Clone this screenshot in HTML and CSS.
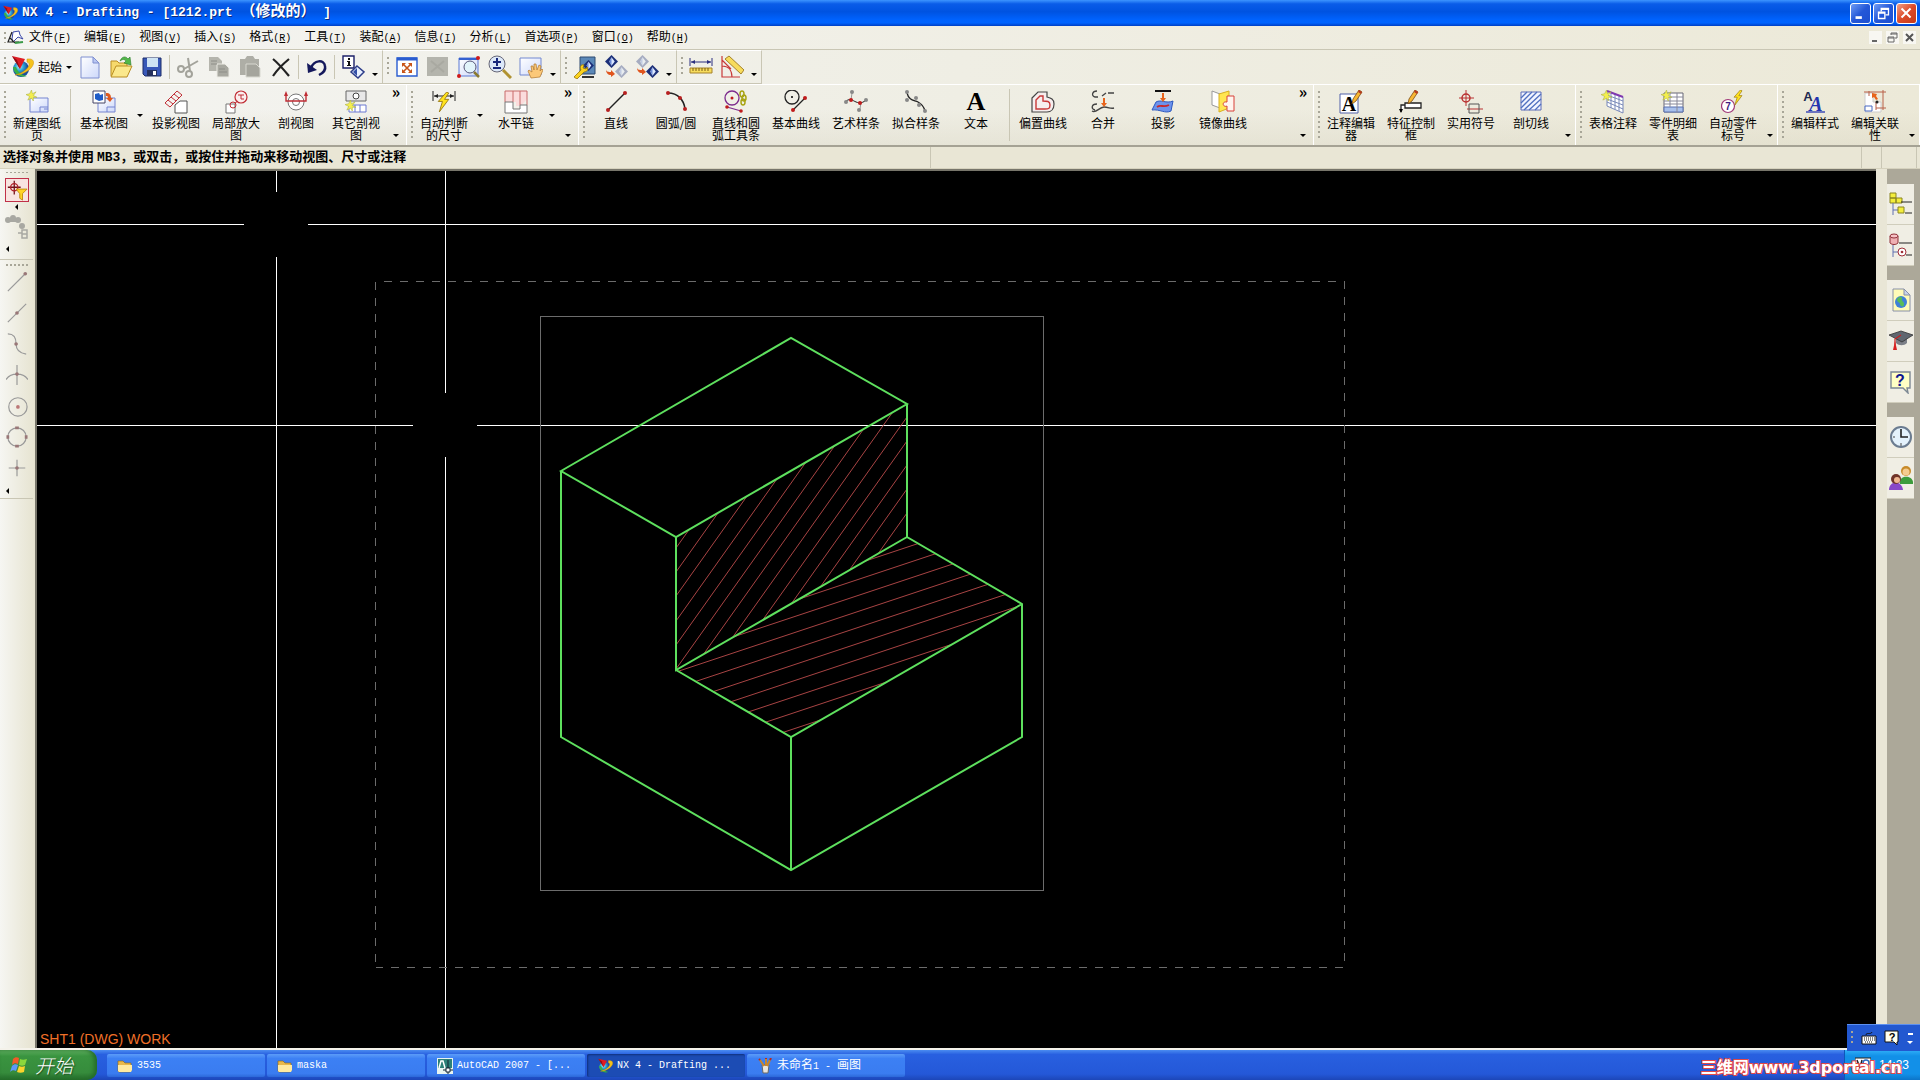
FILE: index.html
```
<!DOCTYPE html>
<html lang="zh-CN">
<head>
  <meta charset="UTF-8" />
  <meta name="viewport" content="width=device-width, initial-scale=1.0"/>
  <title>NX 4 - Drafting</title>
  <link rel="stylesheet" href="styles.css">
</head>
<body>

  <!-- Shared icon shapes -->
  <svg class="defs" aria-hidden="true">
    <defs>
      <radialGradient id="globe" cx="40%" cy="35%"><stop offset="0" stop-color="#b8f4f0"/><stop offset=".5" stop-color="#2fa8d8"/><stop offset="1" stop-color="#1a4fa0"/></radialGradient>
      <linearGradient id="pane" x2="1" y2="1"><stop offset="0" stop-color="#fff"/><stop offset="1" stop-color="#cdd8fa"/></linearGradient>
      <symbol id="nx" viewBox="0 0 24 24">
        <circle cx="11" cy="14" r="8" fill="url(#globe)"/>
        <path d="M3 12c1 8 8 11 14 9-6-1-9-4-11-9z" fill="#38b048"/>
        <path d="M17 4c9-1 8 6 2 11-4 3-9 5-14 5 10-2 18-11 12-13z" fill="#f5c21b" stroke="#c98d08" stroke-width=".5"/>
        <path d="M2 1l13 3-5 10z" fill="#e01c24"/><path d="M2 1l5 4 3 9z" fill="#8e0d14"/>
      </symbol>
      <symbol id="folder" viewBox="0 0 16 16">
        <path d="M1 3h5l2 2h6v8l-1 1H2l-1-1z" fill="#e8b84a" stroke="#8a6210" stroke-width=".6"/>
        <path d="M1 13V7h14v5l-1 2H2z" fill="#ffeaa0"/>
      </symbol>
      <symbol id="star" viewBox="0 0 12 12">
        <path d="M6 0l1 4 4-2-3 4 4 2-4 0 0 4-2-3-4 2 2-4-4-2 4-1z" fill="#f4ee4e" stroke="#a8b040" stroke-width=".6"/>
      </symbol>
      <symbol id="bolt" viewBox="0 0 12 20">
        <path d="M9 0L1 9h4l-3 10 9-12H7l4-6z" fill="#ffe31c" stroke="#93700a" stroke-width=".8"/>
      </symbol>
      <symbol id="pencil" viewBox="0 0 12 14">
        <path d="M8 0l3 2-6 9-4 3 1-5z" fill="#f7b733" stroke="#7a4a10" stroke-width=".8"/><path d="M8 0l3 2-1 2-3-2z" fill="#b83820"/>
      </symbol>
      <symbol id="cube" viewBox="0 0 12 12">
        <path d="M6 0l6 6-6 6-6-6z" fill="#1c2f78"/><path d="M6 2l3 4-3 4-2-4z" fill="#dce8ff"/><path d="M6 2v8l-2-4z" fill="#6c8ad8"/>
      </symbol>
    </defs>
  </svg>

  <!-- Title bar -->
  <header class="titlebar">
    <svg class="title-icon"><use href="#nx"/></svg>
    <h1>NX 4 - Drafting - [1212.prt <span class="cjk">（修改的）</span> ]</h1>
    <div class="window-buttons">
      <button aria-label="最小化"><svg viewBox="0 0 21 21"><path d="M5 15h7" stroke="#fff" stroke-width="3"/></svg></button>
      <button aria-label="还原"><svg viewBox="0 0 21 21"><path d="M8 8V5h8v7h-3M8 6h8M5 9h7v7H5zM5 10h7" fill="none" stroke="#fff" stroke-width="1.5"/></svg></button>
      <button class="close" aria-label="关闭"><svg viewBox="0 0 21 21"><path d="M5 5l10 10M15 5L5 15" stroke="#fff" stroke-width="2.2"/></svg></button>
    </div>
  </header>

  <!-- Menu bar -->
  <nav class="menubar">
    <span class="grip"></span>
    <svg class="menu-icon" viewBox="0 0 18 16"><path d="M6 2l6-1 1 4 3 4-5-2-5 5-1-3z" fill="#fff" stroke="#3a48a8"/><path d="M5 2L1 12l11 0M3 8l5 5" fill="none" stroke="#222" stroke-width="1.2"/><path d="M8 13l8-1" stroke="#3a9a48" stroke-width="2"/></svg>
    <button>文件<span class="key">(<u>F</u>)</span></button>
    <button>编辑<span class="key">(<u>E</u>)</span></button>
    <button>视图<span class="key">(<u>V</u>)</span></button>
    <button>插入<span class="key">(<u>S</u>)</span></button>
    <button>格式<span class="key">(<u>R</u>)</span></button>
    <button>工具<span class="key">(<u>T</u>)</span></button>
    <button>装配<span class="key">(<u>A</u>)</span></button>
    <button>信息<span class="key">(<u>I</u>)</span></button>
    <button>分析<span class="key">(<u>L</u>)</span></button>
    <button>首选项<span class="key">(<u>P</u>)</span></button>
    <button>窗口<span class="key">(<u>O</u>)</span></button>
    <button>帮助<span class="key">(<u>H</u>)</span></button>
    <div class="mdi-buttons">
      <button aria-label="最小化"><svg viewBox="0 0 13 13"><path d="M3 10h5" stroke="#666" stroke-width="2"/></svg></button>
      <button aria-label="还原"><svg viewBox="0 0 13 13"><path d="M5 4V2h6v5H9M5 3h6M2 6h6v5H2zM2 7h6" fill="none" stroke="#666"/></svg></button>
      <button aria-label="关闭"><svg viewBox="0 0 13 13"><path d="M3 3l7 7M10 3l-7 7" stroke="#555" stroke-width="2"/></svg></button>
    </div>
  </nav>

  <!-- Standard toolbar -->
  <div class="toolbar">
    <div class="bar">
      <span class="grip"></span>
      <button class="start-menu"><svg class="icon"><use href="#nx"/></svg>起始<i class="down"></i></button>
      <button aria-label="新建"><svg class="icon" viewBox="0 0 24 24"><path d="M3 2h12l6 6v15H3z" fill="url(#pane)" stroke="#7f8fd0"/><path d="M15 2v6h6z" fill="#b9c6f2" stroke="#7f8fd0"/></svg></button>
      <button aria-label="打开"><svg class="icon" viewBox="0 0 24 24"><path d="M2 21V6h6l2 2h8v4" fill="#f6d96c" stroke="#b98d22"/><path d="M2 22L7 11h16l-5 11z" fill="#fbe88c" stroke="#b98d22"/><path d="M11 6c2-5 6-5 8-2l2-2 1 8-7-2 2-2c-2-2-3-2-6 0z" fill="#51b848" stroke="#2a7a28" stroke-width=".6"/></svg></button>
      <button aria-label="保存"><svg class="icon" viewBox="0 0 24 24"><path d="M3 3h18v18H5l-2-2z" fill="#3858b8" stroke="#1c2c68"/><path d="M7 3h11v9H7z" fill="#cfe4f4"/><path d="M7 15h10v6H7z" fill="#26315e"/><path d="M13 16h3v4h-3z" fill="#fff"/></svg></button>
      <span class="sep"></span>
      <button aria-label="剪切"><svg class="icon" viewBox="0 0 24 24"><g fill="none" stroke="#a3a39b" stroke-width="2"><path d="M12 3l2 13M22 6L8 14"/><circle cx="5" cy="14" r="3"/><circle cx="13" cy="19" r="3"/></g></svg></button>
      <button aria-label="复制"><svg class="icon" viewBox="0 0 24 24"><path d="M2 2h9l4 4v10H2z" fill="#b5b5ad"/><path d="M10 9h8l4 4v9H10z" fill="#a8a8a0" stroke="#ecebe4"/><path d="M4 6h6M4 9h6M12 14h6M12 17h8" stroke="#8e8e88"/></svg></button>
      <button aria-label="粘贴"><svg class="icon" viewBox="0 0 24 24"><path d="M2 4h5l2-3h6l2 3h4v16H2z" fill="#aeaea6"/><path d="M8 9h10l4 4v9H8z" fill="#a5a59d" stroke="#d8d8d0"/></svg></button>
      <button aria-label="删除"><svg class="icon" viewBox="0 0 24 24"><path d="M4 4c5 4 11 11 16 17M20 4C14 9 8 15 4 21" fill="none" stroke="#222" stroke-width="2.2"/></svg></button>
      <span class="sep"></span>
      <button aria-label="撤消"><svg class="icon" viewBox="0 0 24 24"><path d="M6 13C9 5 19 4 20 11c1 4-2 7-6 9" fill="none" stroke="#15195c" stroke-width="2.5"/><path d="M2 8l1 10 9-3z" fill="#15195c"/></svg></button>
      <span class="sep"></span>
      <button aria-label="信息"><svg class="icon" viewBox="0 0 24 24"><path d="M2 1h11v12H2z" fill="#fff" stroke="#1c2068" stroke-width="1.4"/><path d="M7 3h2v2H7zM6 6h3v4h1v1H6v-1h1V7H6z" fill="#111"/><path d="M16 11l7 6-6 6-7-6z" fill="#e8f0ff" stroke="#2c3c88" stroke-width="1.5"/><path d="M16 13v8l-4-4z" fill="#3450a8"/></svg></button>
      <span class="more"><i class="down"></i></span>
    </div>
    <div class="bar">
      <span class="grip"></span>
      <button aria-label="适合窗口"><svg class="icon" viewBox="0 0 24 24"><path d="M2 3h20v18H2z" fill="#fff" stroke="#2a5cd0" stroke-width="1.4"/><path d="M2 4h20" stroke="#2a5cd0" stroke-width="3"/><path d="M8 9l8 8M16 9l-8 8" stroke="#c85418" stroke-width="1.6"/><path d="M7 8h4L7 12zM17 8v4l-4-4zM7 18v-4l4 4zM17 18h-4l4-4z" fill="#c85418"/></svg></button>
      <button aria-label="缩放"><svg class="icon" viewBox="0 0 24 24"><path d="M1 2h21v19H1z" fill="#b4b4ac"/><path d="M5 6l13 11M18 6L5 17" stroke="#a9a9a1" stroke-width="2"/></svg></button>
      <button aria-label="窗口缩放"><svg class="icon" viewBox="0 0 24 24"><path d="M2 3h19v18H2z" fill="url(#pane)" stroke="#5b78d4"/><path d="M2 4h19" stroke="#3460d0" stroke-width="2"/><circle cx="13" cy="12" r="6" fill="#e2f4fa" stroke="#557"/><path d="M17 17l5 5" stroke="#8a7a30" stroke-width="2.5"/><circle cx="21" cy="3" r="2" fill="#d01818"/><circle cx="2" cy="21" r="2" fill="#d01818"/></svg></button>
      <button aria-label="放大缩小"><svg class="icon" viewBox="0 0 24 24"><circle cx="9" cy="9" r="8" fill="#dce8f8" stroke="#667"/><path d="M9 3v8M5 7h8M5 13h8" stroke="#18287c" stroke-width="2"/><path d="M15 15l8 8" stroke="#b09230" stroke-width="3"/></svg></button>
      <button aria-label="平移"><svg class="icon" viewBox="0 0 24 24"><path d="M1 3h21v17H1z" fill="url(#pane)" stroke="#7288d0"/><path d="M12 23l-3-7 1-1 3 2-1-6 2 0 1 4 0-6 2 0 1 6 2-5 2 1-1 5 2-2 1 1-3 7z" fill="#fbc878" stroke="#b0772c" stroke-width=".7"/></svg></button>
      <span class="more"><i class="down"></i></span>
    </div>
    <div class="bar">
      <span class="grip"></span>
      <button aria-label="编辑显示"><svg class="icon" viewBox="0 0 24 24"><path d="M7 2h15v17H7z" fill="#5b88b8" stroke="#2f4a70"/><use href="#cube" x="10" y="5" width="11" height="11"/><path d="M1 22l7-7c-2-4 1-6 3-5l-1 3 3 1 1-2c2 2 0 5-3 5l-7 7z" fill="#fad21e" stroke="#97730c" stroke-width=".8"/><path d="M9 22h12" stroke="#333" stroke-width="2"/></svg></button>
      <button aria-label="显示隐藏"><svg class="icon" viewBox="0 0 24 24"><use href="#cube" x="1" y="0" width="13" height="13"/><use href="#cube" x="11" y="10" width="13" height="13" opacity=".35"/><path d="M2 14c0 3 3 3 5 3v-2l4 4-4 3v-2c-3 0-5-2-5-6z" fill="#e0551e"/></svg></button>
      <button aria-label="反向隐藏"><svg class="icon" viewBox="0 0 24 24"><use href="#cube" x="1" y="0" width="13" height="13" opacity=".35"/><use href="#cube" x="11" y="10" width="13" height="13"/><path d="M2 12c0 3 3 3 5 3v-2l4 4-4 3v-2c-3 0-5-2-5-6z" fill="#e0551e"/></svg></button>
      <span class="more"><i class="down"></i></span>
    </div>
    <div class="bar">
      <span class="grip"></span>
      <button aria-label="测量距离"><svg class="icon" viewBox="0 0 24 24"><path d="M1 3v8M23 3v8M2 7h20" stroke="#2b2f80"/><path d="M2 7l4-2v4zM22 7l-4-2v4z" fill="#2b2f80"/><path d="M1 13h22v5H1z" fill="#f7dc5c" stroke="#a5822a"/><path d="M4 13v3M7 13v3M10 13v3M13 13v3M16 13v3M19 13v3" stroke="#7a5c14"/></svg></button>
      <button aria-label="测量角度"><svg class="icon" viewBox="0 0 24 24"><path d="M2 1v21h18M2 11c6 0 10 4 10 11M2 5l9 9" fill="none" stroke="#c83838" stroke-width="1.2"/><path d="M5 4l4-3 15 14-3 4z" fill="#f7dc5c" stroke="#a5822a"/></svg></button>
      <span class="more"><i class="down"></i></span>
    </div>
  </div>

  <!-- Drafting toolbars -->
  <div class="ribbon">
    <div class="group">
      <span class="grip"></span>
      <button><svg class="icon" viewBox="0 0 24 24"><path d="M5 8h18v14H5z" fill="url(#pane)" stroke="#7484d0"/><path d="M15 17h8M15 17v5M19 19h4" stroke="#7484d0"/><use href="#star" x="1" y="0" width="11" height="11"/></svg><span>新建图纸页</span></button>
      <span class="sep"></span>
      <button><svg class="icon" viewBox="0 0 24 24"><path d="M6 8h17v14H6z" fill="url(#pane)" stroke="#7484d0"/><path d="M15 17h8M15 17v5" stroke="#7484d0"/><path d="M1 1h12v12H1z" fill="#fff" stroke="#446"/><path d="M3 4l4-1 1 2 3-1v6l-4 1-4-2z" fill="#1f5cc8"/><path d="M14 3c4 0 5 2 5 5h2l-3 4-4-4h2c0-2-1-2-2-2z" fill="#e0591e"/></svg><span>基本视图</span></button>
      <span class="drop"><i class="down"></i></span>
      <button><svg class="icon" viewBox="0 0 24 24"><path d="M1 13L13 1l5 4L6 17zM7 7l5 4M10 4l5 4M4 10l5 4" fill="none" stroke="#c02c34"/><path d="M11 23V15l5-4h7v12z" fill="#fff" stroke="#555"/></svg><span>投影视图</span></button>
      <button><svg class="icon" viewBox="0 0 24 24"><path d="M2 14h9v9H2z" fill="#fff" stroke="#777"/><circle cx="17" cy="7" r="6" fill="#fbeeee" stroke="#c02c34" stroke-width="1.2"/><circle cx="9" cy="15" r="3" fill="none" stroke="#c02c34"/><path d="M11 13l3-2M14 5h3v4h3M17 5l3 0" fill="none" stroke="#c02c34"/></svg><span>局部放大图</span></button>
      <button><svg class="icon" viewBox="0 0 24 24"><circle cx="12" cy="12" r="8" fill="#fff" stroke="#777"/><circle cx="12" cy="12" r="3.5" fill="none" stroke="#777"/><path d="M2 5v6h20V5" fill="none" stroke="#c02c34" stroke-width="1.4"/><path d="M2 1l2 5H0zM22 1l2 5h-4z" fill="#c02c34"/></svg><span>剖视图</span></button>
      <button><svg class="icon" viewBox="0 0 24 24"><path d="M2 1h20v10H2z" fill="#e8e8e8" stroke="#666"/><circle cx="12" cy="6" r="3" fill="#fff" stroke="#444"/><path d="M5 15h17v7H5zM11 15v7M16 15v7" fill="#fff" stroke="#6b79d0"/><use href="#star" x="1" y="10" width="11" height="11"/></svg><span>其它剖视图</span></button>
      <span class="overflow"><b>»</b><i class="down"></i></span>
    </div>
    <div class="group">
      <span class="grip"></span>
      <button><svg class="icon" viewBox="0 0 24 24"><path d="M1 1v10M23 1v10M2 6h20" stroke="#222"/><path d="M2 6l4-2v4zM22 6l-4-2v4z" fill="#222"/><use href="#bolt" x="5" y="2" width="13" height="21"/></svg><span>自动判断的尺寸</span></button>
      <span class="drop"><i class="down"></i></span>
      <button><svg class="icon" viewBox="0 0 24 24"><path d="M1 1h22v8l-6 7h-5V12H1z" fill="#fbdcdc"/><path d="M1 1h22M1 1v11M9 1v11M16 1v14M23 1v14" stroke="#c86a6a" fill="none"/><path d="M1 12h8v7h7v-4h7v8H1z" fill="#fff" stroke="#777"/></svg><span>水平链</span></button>
      <span class="drop"><i class="down"></i></span>
      <span class="overflow"><b>»</b><i class="down"></i></span>
    </div>
    <div class="group grow">
      <span class="grip"></span>
      <button><svg class="icon" viewBox="0 0 24 24"><path d="M4 20L21 3" stroke="#222" stroke-width="1.4"/><g fill="#b82020"><circle cx="4" cy="20" r="2"/><circle cx="21" cy="3" r="2"/></g></svg><span>直线</span></button>
      <button><svg class="icon" viewBox="0 0 24 24"><path d="M4 3c10 0 16 7 17 16" fill="none" stroke="#222" stroke-width="1.6"/><g fill="#b82020"><circle cx="4" cy="3" r="2"/><circle cx="16" cy="8" r="2"/><circle cx="21" cy="19" r="2"/></g></svg><span>圆弧/圆</span></button>
      <button><svg class="icon" viewBox="0 0 24 24"><circle cx="8" cy="8" r="7" fill="none" stroke="#7c2a8c" stroke-width="1.3"/><path d="M3 17l14 4" stroke="#7c2a8c" stroke-width="1.3"/><g fill="#c01c1c"><circle cx="8" cy="8" r="1.5"/><circle cx="3" cy="17" r="1.8"/><circle cx="17" cy="21" r="1.8"/></g><g fill="none" stroke="#a8a414" stroke-width="1.5"><ellipse cx="18" cy="4" rx="2" ry="3"/><ellipse cx="20" cy="8" rx="2" ry="3"/><ellipse cx="19" cy="12" rx="2" ry="3"/></g></svg><span>直线和圆弧工具条</span></button>
      <button><svg class="icon" viewBox="0 0 24 24"><circle cx="8" cy="7" r="7" fill="none" stroke="#222" stroke-width="1.3"/><circle cx="8" cy="7" r="1"/><path d="M9 20L21 8" stroke="#222" stroke-width="1.3"/><g fill="#c01c1c"><circle cx="9" cy="20" r="2"/><circle cx="21" cy="8" r="2"/></g></svg><span>基本曲线</span></button>
      <button><svg class="icon" viewBox="0 0 24 24"><path d="M8 3L7 10M16 19l1-7" stroke="#999"/><path d="M1 12c4-4 7-2 9-1s7 4 12-1" fill="none" stroke="#222"/><g fill="#888"><circle cx="8" cy="2" r="2"/><circle cx="2" cy="12" r="2"/><circle cx="15" cy="20" r="2"/><circle cx="22" cy="10" r="2"/></g><circle cx="7" cy="10" r="2" fill="#c01c1c"/><circle cx="16" cy="13" r="2" fill="#c01c1c"/></svg><span>艺术样条</span></button>
      <button><svg class="icon" viewBox="0 0 24 24"><path d="M3 3c2 8 7 7 11 9s6 5 7 9" fill="none" stroke="#222" stroke-width="1.3"/><g fill="#888"><circle cx="3" cy="2" r="2"/><circle cx="3" cy="10" r="2"/><circle cx="12" cy="8" r="2"/><circle cx="15" cy="15" r="2"/><circle cx="21" cy="21" r="2"/></g></svg><span>拟合样条</span></button>
      <button><b class="icon text-icon">A</b><span>文本</span></button>
      <span class="sep"></span>
      <button><svg class="icon" viewBox="0 0 24 24"><path d="M1 8l6-6h9v5c4 1 7 2 7 7s-3 8-7 8H1z" fill="#f6eeee" stroke="#444" stroke-width="1.2"/><path d="M5 10l4-4h3v5c4 0 7 0 7 4s-2 4-5 4H5z" fill="none" stroke="#c83838" stroke-width="1.4"/></svg><span>偏置曲线</span></button>
      <button><svg class="icon" viewBox="0 0 24 24"><path d="M6 1C1 1 0 6 4 7h3M11 6l4-3M17 3l6 0M1 21c4 3 7-4 12-4s6 2 10 1M6 14c-6 0-6 5-2 6" fill="none" stroke="#444" stroke-width="1.3"/><path d="M12 8h2v5h2l-3 4-3-4h2z" fill="#e8641c"/></svg><span>合并</span></button>
      <button><svg class="icon" viewBox="0 0 24 24"><path d="M4 1h16" stroke="#111" stroke-width="2"/><path d="M1 20l4-8c5-3 10 2 17-1l-2 10c-6 3-11-2-19-1z" fill="#6d93ec" stroke="#2c58c0"/><path d="M6 17c4-3 6 1 12-2" fill="none" stroke="#c8282c" stroke-width="1.8"/><path d="M11 3h2v5h2l-3 4-3-4h2z" fill="#e8641c"/></svg><span>投影</span></button>
      <button><svg class="icon" viewBox="0 0 24 24"><path d="M1 1l8 3v14l-8-3z" fill="#fff" stroke="#999"/><path d="M8 4l10-3v17l-10 4z" fill="#ffe650" stroke="#d8b020"/><path d="M16 6h7v15h-7v-5c-4 2-6-5 0-4z" fill="#fff4ee" stroke="#d84038"/></svg><span>镜像曲线</span></button>
      <span class="overflow"><b>»</b><i class="down"></i></span>
    </div>
    <div class="group narrow">
      <span class="grip"></span>
      <button><svg class="icon" viewBox="0 0 24 24"><path d="M1 4h18v19H1z" fill="#fff" stroke="#5060a8"/><text class="serif-a" x="10" y="21" text-anchor="middle">A</text><use href="#pencil" x="12" y="0" width="12" height="14"/></svg><span>注释编辑器</span></button>
      <button><svg class="icon" viewBox="0 0 24 24"><path d="M6 13h16v5H6zM6 15H2v7" fill="#fff" stroke="#222" stroke-width="1.3"/><path d="M0 19h4l-2 4z"/><use href="#pencil" x="8" y="0" width="12" height="14"/></svg><span>特征控制框</span></button>
      <button><svg class="icon" viewBox="0 0 24 24"><path d="M7 0v16M0 8h15M8 19h16" stroke="#b83030"/><circle cx="7" cy="8" r="4" fill="none" stroke="#b83030" stroke-width="1.5"/><path d="M10 14h10v9H10z" fill="none" stroke="#555"/></svg><span>实用符号</span></button>
      <button><svg class="icon" viewBox="0 0 24 24"><path d="M2 2h20v18H2z" fill="#f2f4ff" stroke="#5c6cb8"/><path d="M2 8l6-6M2 13L13 2M2 18L18 2M5 20L22 4M10 20L22 9M16 20l6-6" stroke="#5070c0" stroke-width="1.3"/></svg><span>剖切线</span></button>
      <span class="overflow"><i class="down"></i></span>
    </div>
    <div class="group narrow">
      <span class="grip"></span>
      <button><svg class="icon" viewBox="0 0 24 24"><path d="M6 1l16 6v16L6 16z" fill="#fff" stroke="#7888b8"/><path d="M6 5l16 6M6 9l16 6M6 12l16 7M10 3v15M14 4v15M18 6v15" stroke="#7888b8"/><path d="M6 1l16 6" stroke="#8038b0" stroke-width="2"/><use href="#star" x="0" y="0" width="11" height="11"/></svg><span>表格注释</span></button>
      <button><svg class="icon" viewBox="0 0 24 24"><path d="M3 3h19v19H3z" fill="#fff" stroke="#667"/><path d="M3 17h19v5H3z" fill="#a8c0ec" stroke="#5870b0"/><path d="M3 7h19M3 11h19M3 14h19M9 3v14M16 3v19" stroke="#889"/><use href="#star" x="0" y="0" width="11" height="11"/></svg><span>零件明细表</span></button>
      <button><svg class="icon" viewBox="0 0 24 24"><circle cx="7" cy="16" r="6.5" fill="#fff" stroke="#a03878" stroke-width="1.2"/><text class="digit" x="7" y="20" text-anchor="middle">7</text><use href="#bolt" x="11" y="0" width="12" height="16"/></svg><span>自动零件标号</span></button>
      <span class="overflow"><i class="down"></i></span>
    </div>
    <div class="group narrow">
      <span class="grip"></span>
      <button><svg class="icon" viewBox="0 0 24 24"><text class="sans-a" x="5" y="11" text-anchor="middle">A</text><text class="blue-a" x="13" y="21" text-anchor="middle">A</text><path d="M3 22h19" stroke="#2434b0" stroke-width="1.3"/></svg><span>编辑样式</span></button>
      <button><svg class="icon" viewBox="0 0 24 24"><path d="M2 3h8v9h8v10H2z" fill="#fff" stroke="#ccc"/><path d="M2 16h7v5H2z" fill="#fff" stroke="#4868c0"/><path d="M1 2h22M6 1v5M20 0v20M13 18h10M13 12v8" stroke="#b86048" fill="none"/><path d="M9 3l5 1-1 2 2 3-2 1-2-3-2 1z" fill="#e8641c"/><circle cx="14" cy="12" r="1.5" fill="#222"/></svg><span>编辑关联性</span></button>
      <span class="overflow"><i class="down"></i></span>
    </div>
  </div>

  <!-- Cue line -->
  <div class="cueline">
    <p class="cue">选择对象并使用 <span class="latin">MB3</span>，或双击，或按住并拖动来移动视图、尺寸或注释</p>
    <p class="status"></p>
    <span class="cell"></span>
    <span class="cell wide"></span>
  </div>

  <main>
    <!-- Selection and snap point tools -->
    <aside class="snapbar">
      <div class="snapgroup">
        <span class="hgrip"></span>
        <button class="active" aria-label="选择过滤"><svg viewBox="0 0 24 24"><path d="M9 2v15M2 9h14" stroke="#701018" stroke-width="1.4"/><circle cx="9" cy="9" r="4" fill="none" stroke="#b02028" stroke-width="1.4"/><path d="M11 11h12l-5 5v7l-3-2v-5z" fill="#ffd426" stroke="#c08a10"/></svg></button>
        <i class="left center"></i>
        <button aria-label="选择意图"><svg viewBox="0 0 24 24"><g fill="#a8a8a2"><circle cx="3" cy="5" r="3"/><circle cx="8" cy="3" r="3"/><circle cx="13" cy="5" r="3"/><circle cx="17" cy="11" r="3"/><path d="M3 3h10v4H3z"/></g><path d="M17 15h5v8h-5zM17 19h5M13 18l4 0" fill="none" stroke="#a8a8a2" stroke-width="1.5"/></svg></button>
        <i class="left"></i>
      </div>
      <div class="snapgroup points">
        <span class="hgrip"></span>
        <button aria-label="端点"><svg viewBox="0 0 24 24"><path d="M2 22L21 3" stroke="#999" stroke-width="1.3"/><circle cx="21" cy="3" r="2" fill="#977"/></svg></button>
        <button aria-label="中点"><svg viewBox="0 0 24 24"><path d="M2 22L22 2" stroke="#999" stroke-width="1.3"/><circle cx="12" cy="12" r="2" fill="#977"/></svg></button>
        <button aria-label="控制点"><svg viewBox="0 0 24 24"><path d="M2 1c7 0 9 4 9 11s4 10 11 11" fill="none" stroke="#999" stroke-width="1.3"/><circle cx="11" cy="12" r="2" fill="#977"/></svg></button>
        <button aria-label="交点"><svg viewBox="0 0 24 24"><path d="M12 1v22M0 17c5-8 19-8 24 0" fill="none" stroke="#999" stroke-width="1.3"/><circle cx="12" cy="11" r="2" fill="#977"/></svg></button>
        <button aria-label="圆心"><svg viewBox="0 0 24 24"><circle cx="13" cy="13" r="10" fill="none" stroke="#999" stroke-width="1.3"/><circle cx="13" cy="13" r="2" fill="#b77"/></svg></button>
        <button aria-label="象限点"><svg viewBox="0 0 24 24"><circle cx="12" cy="12" r="10" fill="none" stroke="#999" stroke-width="1.3"/><path d="M10 2h4M10 22h4M2 10v4M22 10v4" stroke="#977" stroke-width="3"/></svg></button>
        <button aria-label="现有点"><svg viewBox="0 0 24 24"><path d="M12 3v18M3 12h18" stroke="#999" stroke-width="1.3"/><circle cx="12" cy="12" r="2" fill="#977"/></svg></button>
        <i class="left"></i>
      </div>
    </aside>

    <!-- Drawing sheet -->
    <section class="canvas">
      <svg class="drawing">
        <defs>
          <clipPath id="riser"><path d="M676 537L907 404V537L676 670z"/></clipPath>
          <clipPath id="tread"><path d="M676 670L907 537L1022 604L791 737z"/></clipPath>
        </defs>
        <g transform="translate(-37 -171)" fill="none">
          <g class="datum">
            <path d="M0 224.5H244M308 224.5H5000M0 425.5H413M477 425.5H5000"/>
            <path d="M276.5 0V192M276.5 257V5000M445.5 0V393M445.5 457V5000"/>
          </g>
          <path class="border" stroke-dasharray="8 8" d="M384 281.5H1344M375.5 282V968M1207 967.5H1344M1199 967.5H376M1344.5 281V968"/>
          <rect class="border" x="540.5" y="316.5" width="503" height="574"/>
          <path class="hatch" clip-path="url(#riser)" d="M676 548l231-325M676 572l231-325M676 596l231-325M676 621l231-325M676 645l231-325M676 669l231-325M676 693l231-325M676 717l231-325M676 742l231-325M676 766l231-325M676 790l231-325M676 814l231-325M676 838l231-325"/>
          <path class="hatch" clip-path="url(#tread)" d="M676 624l346-115M676 640l346-115M676 656l346-115M676 672l346-115M676 688l346-115M676 704l346-115M676 720l346-115M676 736l346-115M676 752l346-115M676 768l346-115"/>
          <path class="edge" d="M561 471L791 338L907 404L676 537zM561 471V737L791 870L1022 737V604L907 537V404M676 537V670L907 537M676 670L791 737L1022 604M791 737V870"/>
        </g>
      </svg>
      <span class="sheet-name">SHT1 (DWG) WORK</span>
    </section>

    <!-- Resource bar -->
    <aside class="resources">
      <div class="tabs">
        <button aria-label="装配导航器"><svg viewBox="0 0 24 24"><path d="M1 1h6v5H1zM1 6h6v5H1zM7 6h6v5H7z" fill="#f4ee3c" stroke="#8a8420"/><path d="M12 10h11M16 21h7" stroke="#222"/><path d="M4 11v12M4 18h5" stroke="#6070b0"/><path d="M9 15h6v6H9z" fill="#f4ee3c" stroke="#8a8420"/></svg></button>
        <button aria-label="部件导航器"><svg viewBox="0 0 24 24"><path d="M1 3v7c2 2 6 2 8 0V3" fill="#eeb0b4" stroke="#903038"/><ellipse cx="5" cy="3" rx="4" ry="2" fill="#f6c0c4" stroke="#903038"/><path d="M10 10h13M17 22h6" stroke="#222"/><path d="M4 12v12M4 19h5" stroke="#6070b0"/><circle cx="13" cy="19" r="4" fill="#fff" stroke="#a03038"/><circle cx="13" cy="19" r="1.3" fill="#a03038"/></svg></button>
      </div>
      <div class="tabs">
        <button aria-label="浏览器"><svg viewBox="0 0 24 24"><path d="M4 1h11l6 6v16H4z" fill="#fffbb8" stroke="#8890a8"/><path d="M15 1v6h6z" fill="#c8d4ec" stroke="#8890a8"/><circle cx="12" cy="14" r="6" fill="#3f80d8"/><path d="M8 11c3-4 6-2 5 0s3 3 2 6-4 1-4-1-3-1-3-5z" fill="#58bc58"/></svg></button>
        <button aria-label="培训"><svg viewBox="0 0 24 24"><path d="M7 8v6c3 3 8 3 11 0V8" fill="#7c8088"/><path d="M0 6l12-4 12 4-11 7z" fill="#60666f" stroke="#333" stroke-width=".8"/><path d="M12 6L6 10v6" fill="none" stroke="#c82020" stroke-width="1.2"/><path d="M6 12l2 9H4z" fill="#d82020"/></svg></button>
        <button aria-label="帮助"><svg viewBox="0 0 24 24"><path d="M2 2h19v16h-3l1 5-5-5H2z" fill="#ffffc4" stroke="#7c8894" stroke-width="1.4"/><text class="question" x="11" y="16" text-anchor="middle">?</text></svg></button>
      </div>
      <div class="tabs">
        <button aria-label="历史"><svg viewBox="0 0 24 24"><circle cx="12" cy="12" r="10" fill="#e4f2fc" stroke="#6b7c90" stroke-width="2"/><path d="M12 4v8h7" fill="none" stroke="#222" stroke-width="1.6"/><path d="M12 18v3M4 12h2" stroke="#444"/></svg></button>
        <button aria-label="角色"><svg viewBox="0 0 24 24"><path d="M11 16c0-7 12-7 13 0v2H11z" fill="#3c9c3c"/><circle cx="17" cy="5" r="5" fill="#c88a28"/><circle cx="17" cy="6" r="3.5" fill="#f4cc90"/><path d="M0 24c0-10 13-10 14 0z" fill="#8848c8"/><circle cx="7" cy="13" r="5" fill="#703428"/><circle cx="8" cy="14" r="3" fill="#f0b890"/></svg></button>
      </div>
    </aside>
  </main>

  <!-- Taskbar -->
  <footer class="taskbar">
    <button class="start">
      <svg viewBox="0 0 20 20"><path d="M3 4c2-2 4-2 6-1L8 9C6 8 4 8 2 10z" fill="#f25a28"/><path d="M10 4c2 1 4 1 7 0l-2 6c-2 1-4 1-6 0z" fill="#8cd83c"/><path d="M2 11c2-2 4-2 6-1l-2 6c-2-1-4-1-6 1z" fill="#5c98f8"/><path d="M9 11c2 1 4 1 6 0l-1 6c-2 1-5 1-7 0z" fill="#fcd42c"/></svg>
      开始
    </button>
    <div class="tasks">
      <button><svg><use href="#folder"/></svg><span class="latin">3535</span></button>
      <button><svg><use href="#folder"/></svg><span class="latin">maska</span></button>
      <button><svg viewBox="0 0 16 16"><path d="M0 0h16v16H0z" fill="#e8f4f0"/><path d="M1 1h14v9H1z" fill="#2c8078"/><path d="M2 10l2-7h2l2 7" fill="none" stroke="#fff" stroke-width="1.5"/><path d="M11 2v14M6 12h10" stroke="#123" stroke-width="1"/><path d="M9 10h4v4H9z" fill="#fff" stroke="#123"/></svg><span class="latin">AutoCAD 2007 - [...</span></button>
      <button class="pressed"><svg><use href="#nx"/></svg><span class="latin">NX 4 - Drafting ...</span></button>
      <button><svg viewBox="0 0 16 16"><path d="M5 7h7l-1 8H6z" fill="#e8e4dc" stroke="#666"/><path d="M7 8L3 2M9 8V1M10 8l3-6" stroke="#c8862c" stroke-width="2"/><path d="M3 2l-1-1M9 1V0M13 2l1-2" stroke="#b82820" stroke-width="2"/></svg><span>未命名<span class="latin">1 - </span>画图</span></button>
    </div>
    <div class="tray">
      <svg viewBox="0 0 16 16"><path d="M0 1h16v14H0z" fill="#fff" stroke="#222"/><path d="M2 3l3 8 2-8" fill="none" stroke="#222" stroke-width="1.5"/><circle cx="11" cy="6" r="3" fill="none" stroke="#2a68c0" stroke-width="1.5"/></svg>
      <time>14:23</time>
    </div>
    <span class="watermark">三维网www.3dportal.cn</span>
    <div class="langbar">
      <span class="grip"></span>
      <svg viewBox="0 0 16 16"><path d="M1 6h14v8H1z" fill="#fff" stroke="#111"/><path d="M3 8h11M3 10h11M4 12h8" stroke="#111" stroke-dasharray="1 1"/><path d="M5 5c0-3 5 0 6-3" fill="none" stroke="#111"/></svg>
      <svg viewBox="0 0 16 16"><path d="M1 1h13v11h-1v3l-3-3H1z" fill="#fffff0" stroke="#111"/><text class="lang-help" x="8" y="11" text-anchor="middle">?</text></svg>
      <span class="lang-options"><i class="dash"></i><i class="down"></i></span>
    </div>
  </footer>

</body>
</html>
```
FILE: styles.css
```
:root {
  --face: #ece9d8;
  --face-light: #f4f4f1;
  --shadow: #c9c6b4;
  --cjk: "Noto Sans CJK SC", sans-serif;
  --mono: "Liberation Mono", "Noto Sans CJK SC", monospace;
}

* {
  box-sizing: border-box;
}

body {
  margin: 0;
  height: 100vh;
  overflow: hidden;
  display: flex;
  flex-direction: column;
  background: var(--face);
  font-family: var(--cjk);
  font-size: 12px;
  line-height: 12px;
  color: #000;
}

button {
  margin: 0;
  padding: 0;
  border: none;
  background: none;
  font: inherit;
  color: inherit;
}

svg {
  display: block;
  flex: none;
}

.defs {
  position: absolute;
  width: 0;
  height: 0;
}

.latin,
.key {
  font-family: var(--mono);
  font-size: 10px;
}

.icon {
  width: 24px;
  height: 24px;
}

.down {
  width: 0;
  height: 0;
  border: 3px solid transparent;
  border-top-color: #000;
  border-bottom: none;
}

.left {
  width: 0;
  height: 0;
  border: 3px solid transparent;
  border-right-color: #000;
  border-left: none;
}

.grip {
  flex: none;
  width: 7px;
  background: linear-gradient(#a8a698, #a8a698) 4px 0 / 2px 2px;
  background: repeating-linear-gradient(#a8a698 0 2px, transparent 2px 5px) 4px 0 / 2px 100% no-repeat content-box;
  padding: 6px 0;
}

.sep {
  flex: none;
  width: 1px;
  margin: 4px 3px;
  background: var(--shadow);
}

/* Title bar */
.titlebar {
  flex: none;
  display: flex;
  align-items: center;
  height: 26px;
  padding: 0 3px 0 2px;
  background: linear-gradient(#3d95ff 0, #0a5ce8 15%, #0053e1 45%, #0062fd 75%, #0064ff 88%, #003fc4 100%);
  color: #fff;
}

.titlebar h1 {
  flex: 1;
  margin: 0;
  font-family: var(--mono);
  font-size: 13px;
  line-height: 18px;
  text-shadow: 1px 1px #0a2a80;
  white-space: pre;
}

.titlebar .cjk {
  font-size: 15px;
}

.title-icon {
  width: 16px;
  height: 16px;
  margin-right: 4px;
}

.window-buttons {
  display: flex;
  gap: 2px;
}

.window-buttons button {
  width: 21px;
  height: 21px;
  border: 1px solid #fff;
  border-radius: 3px;
  background: linear-gradient(135deg, #6f9cf4, #2458d8 50%, #1d4fd0);
}

.window-buttons .close {
  background: linear-gradient(135deg, #f0a088, #dc4a28 50%, #c43a18);
}

/* Menu bar */
.menubar {
  flex: none;
  display: flex;
  align-items: center;
  height: 24px;
  padding-right: 4px;
  background: linear-gradient(90deg, var(--face-light), var(--face));
  border-bottom: 1px solid var(--shadow);
}

.menubar .grip {
  align-self: stretch;
}

.menubar > button {
  margin-right: 13px;
}

.menu-icon {
  width: 18px;
  height: 16px;
  margin-right: 4px;
}

.mdi-buttons {
  display: flex;
  gap: 4px;
  margin-left: auto;
}

.mdi-buttons button {
  width: 13px;
  height: 13px;
  background: #f8f7f2;
}

/* Standard toolbar */
.toolbar {
  flex: none;
  display: flex;
  height: 34px;
  background: linear-gradient(90deg, var(--face-light), #efeee4 50%, var(--face));
}

.bar {
  display: flex;
  border-top: 1px solid #fff;
  border-right: 1px solid var(--shadow);
  border-bottom: 1px solid var(--shadow);
}

.bar .grip {
  width: 8px;
}

.bar .sep {
  margin: 4px 2px;
}

.bar button {
  display: flex;
  align-items: center;
  justify-content: center;
  width: 31px;
}

.bar .start-menu {
  width: 66px;
  gap: 4px;
}

.more {
  display: flex;
  align-items: flex-end;
  justify-content: center;
  width: 14px;
  padding-bottom: 7px;
}

/* Drafting toolbars */
.ribbon {
  flex: none;
  display: flex;
  height: 63px;
  background: linear-gradient(90deg, var(--face-light), #efeee4 50%, var(--face));
  border-top: 1px solid #fff;
  border-bottom: 2px solid #a5a294;
}

.group {
  display: flex;
  border-right: 1px solid #fff;
  background: linear-gradient(transparent 40%, rgba(214, 210, 190, 0.35));
}

.group.grow {
  flex: 1;
}

.group button {
  display: flex;
  flex-direction: column;
  align-items: center;
  gap: 3px;
  width: 60px;
  padding-top: 5px;
}

.group button span {
  max-width: 50px;
  text-align: center;
}

.drop {
  display: flex;
  justify-content: center;
  width: 12px;
  padding-top: 29px;
}

.overflow {
  display: flex;
  flex-direction: column;
  align-items: center;
  width: 20px;
  margin-left: auto;
  padding-bottom: 8px;
}

.overflow b {
  font-size: 16px;
}

.overflow .down {
  margin-top: auto;
}

.narrow .overflow {
  width: 14px;
}

.text-icon {
  font: bold 26px/24px "Liberation Serif", serif;
}

.serif-a {
  font: bold 20px "Liberation Serif", serif;
}

.sans-a {
  font: bold 13px "Liberation Sans", sans-serif;
  fill: #222a50;
}

.blue-a {
  font: italic bold 20px "Liberation Serif", serif;
  fill: #2434b0;
}

.digit {
  font: bold 10px "Liberation Sans", sans-serif;
  fill: #402080;
}

/* Cue line */
.cueline {
  flex: none;
  display: flex;
  height: 22px;
  padding-right: 3px;
  background: #e9e6d5;
  border-bottom: 1px solid #d6d2be;
}

.cueline p {
  margin: 0;
}

.cue {
  width: 931px;
  padding: 2px 0 0 3px;
  border-right: 1px solid var(--shadow);
  font-size: 13px;
  font-weight: bold;
  line-height: 14px;
}

.cue .latin {
  font-size: 13px;
}

.status {
  flex: 1;
}

.cell {
  width: 20px;
  border-left: 1px solid var(--shadow);
}

.cell.wide {
  width: 36px;
  border-right: 1px solid var(--shadow);
}

/* Work area */
main {
  flex: 1;
  display: flex;
  min-height: 0;
  border-bottom: 2px solid #f4f2ea;
}

.snapbar {
  width: 35px;
  padding-right: 2px;
  background: linear-gradient(90deg, #f6f6f2, #e6e3d0);
}

.snapgroup {
  display: flex;
  flex-direction: column;
  align-items: center;
  height: 91px;
  padding-top: 3px;
  border-bottom: 1px solid var(--shadow);
}

.snapgroup.points {
  height: 239px;
  padding-top: 4px;
}

.hgrip {
  width: 22px;
  height: 2px;
  margin-bottom: 5px;
  background: repeating-linear-gradient(90deg, #a8a698 0 2px, transparent 2px 4px);
}

.snapgroup button {
  width: 24px;
  height: 24px;
}

.snapgroup button svg {
  width: 100%;
  height: 100%;
}

.snapgroup .active {
  border: 1px solid #c03048;
  background: #f8e4e0;
}

.snapgroup .left {
  align-self: flex-start;
  margin: 7px 6px;
}

.snapgroup .left.center {
  align-self: center;
  margin: 2px 0 5px;
}

.points button {
  width: 22px;
  height: 22px;
  margin-bottom: 9px;
}

.snapgroup.points .left {
  margin: 0 6px;
}

.canvas {
  position: relative;
  flex: 1;
  overflow: hidden;
  background: #000;
  border-top: 2px solid #77756a;
  border-left: 2px solid #77756a;
}

.drawing {
  position: absolute;
  inset: 0;
  width: 100%;
  height: 100%;
}

.datum {
  stroke: #fff;
  shape-rendering: crispEdges;
}

.border {
  stroke: #6c6c6c;
  shape-rendering: crispEdges;
}

.hatch {
  stroke: #a84444;
}

.edge {
  stroke: #5ee05e;
  stroke-width: 2;
}

.sheet-name {
  position: absolute;
  left: 3px;
  bottom: 1px;
  font: 14px "Liberation Sans", sans-serif;
  color: #f07028;
}

.resources {
  display: flex;
  flex-direction: column;
  gap: 14px;
  width: 44px;
  padding: 15px 6px 0 0;
  border-left: 11px solid #e9e6d6;
  background: #aca899;
}

.tabs {
  background: #f0eee4;
}

.tabs button {
  display: flex;
  align-items: center;
  justify-content: center;
  width: 100%;
  height: 41px;
  border-bottom: 1px solid #d0cdbc;
}

.tabs svg {
  width: 24px;
  height: 24px;
}

.question {
  font: bold 16px "Liberation Sans", sans-serif;
  fill: #101890;
}

/* Taskbar */
.taskbar {
  position: relative;
  flex: none;
  display: flex;
  height: 30px;
  background: linear-gradient(#4a8cf0 0, #2860e0 15%, #2458d8 80%, #1c46b8 100%);
  color: #fff;
}

.start {
  display: flex;
  align-items: center;
  gap: 5px;
  width: 97px;
  padding-left: 10px;
  border-radius: 0 10px 10px 0;
  background: linear-gradient(#64b464 0, #3a9440 20%, #368c3c 75%, #246c2a 100%);
  box-shadow: inset -3px 0 4px #246c2a;
  font-size: 19px;
  font-style: italic;
  font-weight: 300;
  line-height: 20px;
  text-shadow: 1px 1px 1px #1c4c20;
}

.start svg {
  width: 20px;
  height: 20px;
}

.tasks {
  flex: 1;
  display: flex;
  gap: 2px;
  margin-left: 10px;
  padding: 4px 0 3px;
}

.tasks button {
  display: flex;
  align-items: center;
  gap: 4px;
  width: 158px;
  padding-left: 10px;
  border-radius: 2px;
  background: linear-gradient(#5c9cf8 0, #3c80f4 20%, #3a7cf0 85%, #2c68d8 100%);
  white-space: pre;
}

.tasks .pressed {
  background: #1c4cb4;
  box-shadow: inset 1px 1px 2px #10307c;
}

.tasks svg {
  width: 16px;
  height: 16px;
}

.tray {
  display: flex;
  align-items: center;
  gap: 8px;
  width: 76px;
  padding-left: 10px;
  border-left: 1px solid #0c58b8;
  background: linear-gradient(#30b0f8 0, #1290e8 20%, #1290e8 80%, #0c74c8 100%);
}

.tray svg {
  width: 16px;
  height: 16px;
}

.tray time {
  font: 12px "Liberation Sans", sans-serif;
}

.watermark {
  position: absolute;
  right: 18px;
  bottom: 3px;
  font: bold 16px/18px "DejaVu Sans", "Noto Sans CJK SC", sans-serif;
  color: #fff;
  -webkit-text-stroke: 2px #e04848;
  paint-order: stroke fill;
}

.langbar {
  position: absolute;
  right: 0;
  bottom: 29px;
  display: flex;
  align-items: center;
  gap: 7px;
  width: 73px;
  height: 27px;
  border-top: 1px solid #5c90f0;
  background: #2258d0;
}

.langbar .grip {
  align-self: stretch;
}

.langbar svg {
  width: 16px;
  height: 16px;
}

.lang-help {
  font: bold 11px "Liberation Sans", sans-serif;
}

.lang-options {
  display: flex;
  flex-direction: column;
  align-items: center;
  gap: 6px;
}

.lang-options .dash {
  width: 5px;
  height: 2px;
  background: #fff;
}

.lang-options .down {
  border-top-color: #fff;
}
```
